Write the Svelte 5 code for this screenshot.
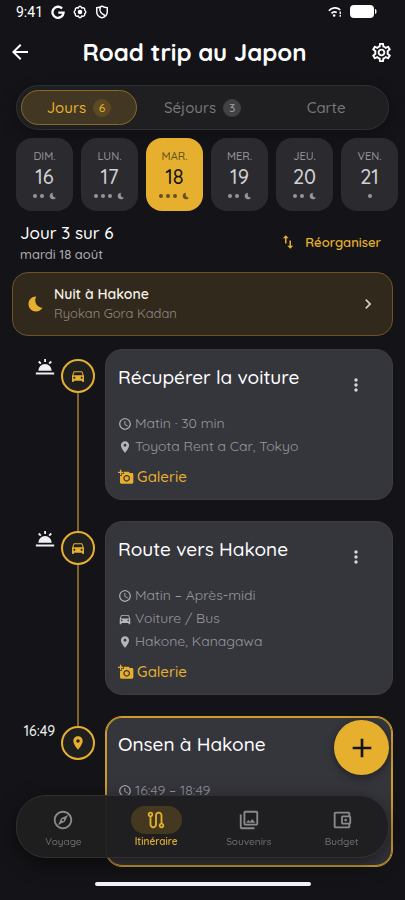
<script lang="ts">
  type IconName = keyof typeof icons;

  interface Meta {
    icon: IconName;
    text: string;
  }

  interface Step {
    title: string;
    time?: string;
    icon: IconName;
    active?: boolean;
    meta: Meta[];
  }

  const icons = {
    back: 'M20 11H7.83l5.59-5.59L12 4l-8 8 8 8 1.41-1.41L7.83 13H20v-2z',
    settings:
      'M19.43 12.98c.04-.32.07-.64.07-.98 0-.34-.03-.66-.07-.98l2.11-1.65c.19-.15.24-.42.12-.64l-2-3.46c-.09-.16-.26-.25-.44-.25-.06 0-.12.01-.17.03l-2.49 1c-.52-.4-1.08-.73-1.69-.98l-.38-2.65C14.46 2.18 14.25 2 14 2h-4c-.25 0-.46.18-.49.42l-.38 2.65c-.61.25-1.17.59-1.69.98l-2.49-1c-.06-.02-.12-.03-.18-.03-.17 0-.34.09-.43.25l-2 3.46c-.13.22-.07.49.12.64l2.11 1.65c-.04.32-.07.65-.07.98 0 .33.03.66.07.98l-2.11 1.65c-.19.15-.24.42-.12.64l2 3.46c.09.16.26.25.44.25.06 0 .12-.01.17-.03l2.49-1c.52.4 1.08.73 1.69.98l.38 2.65c.03.24.24.42.49.42h4c.25 0 .46-.18.49-.42l.38-2.65c.61-.25 1.17-.59 1.69-.98l2.49 1c.06.02.12.03.18.03.17 0 .34-.09.43-.25l2-3.46c.12-.22.07-.49-.12-.64l-2.11-1.65zm-1.98-1.71c.04.31.05.52.05.73 0 .21-.02.43-.05.73l-.14 1.13.89.7 1.08.84-.7 1.21-1.27-.51-1.04-.42-.9.68c-.43.32-.84.56-1.25.73l-1.06.43-.16 1.13-.2 1.35h-1.4l-.19-1.35-.16-1.13-1.06-.43c-.43-.18-.83-.41-1.23-.71l-.91-.7-1.06.43-1.27.51-.7-1.21 1.08-.84.89-.7-.14-1.13c-.03-.31-.05-.54-.05-.74s.02-.43.05-.73l.14-1.13-.89-.7-1.08-.84.7-1.21 1.27.51 1.04.42.9-.68c.43-.32.84-.56 1.25-.73l1.06-.43.16-1.13.2-1.35h1.39l.19 1.35.16 1.13 1.06.43c.43.18.83.41 1.23.71l.91.7 1.06-.43 1.27-.51.7 1.21-1.07.85-.89.7.14 1.13zM12 8c-2.21 0-4 1.79-4 4s1.79 4 4 4 4-1.79 4-4-1.79-4-4-4zm0 6c-1.1 0-2-.9-2-2s.9-2 2-2 2 .9 2 2-.9 2-2 2z',
    moon: 'M12.34 2.02C6.59 1.82 2 6.42 2 12c0 5.52 4.48 10 10 10 3.71 0 6.93-2.02 8.66-5.02-7.51-.25-12.09-8.43-8.32-14.96z',
    swap: 'M16 17.01V10h-2v7.01h-3L15 21l4-3.99h-3zM9 3 5 6.99h3V14h2V6.99h3L9 3z',
    chevron: 'M10 6 8.59 7.41 13.17 12l-4.58 4.59L10 18l6-6z',
    car: 'M18.92 6.01C18.72 5.42 18.16 5 17.5 5h-11c-.66 0-1.21.42-1.42 1.01L3 12v8c0 .55.45 1 1 1h1c.55 0 1-.45 1-1v-1h12v1c0 .55.45 1 1 1h1c.55 0 1-.45 1-1v-8l-2.08-5.99zM6.5 16c-.83 0-1.5-.67-1.5-1.5S5.67 13 6.5 13s1.5.67 1.5 1.5S7.33 16 6.5 16zm11 0c-.83 0-1.5-.67-1.5-1.5s.67-1.5 1.5-1.5 1.5.67 1.5 1.5-.67 1.5-1.5 1.5zM5 11l1.5-4.5h11L19 11H5z',
    place:
      'M12 2C8.13 2 5 5.13 5 9c0 5.25 7 13 7 13s7-7.75 7-13c0-3.87-3.13-7-7-7zm0 9.5c-1.38 0-2.5-1.12-2.5-2.5s1.12-2.5 2.5-2.5 2.5 1.12 2.5 2.5-1.12 2.5-2.5 2.5z',
    clock:
      'M11.99 2C6.47 2 2 6.48 2 12s4.47 10 9.99 10C17.52 22 22 17.52 22 12S17.52 2 11.99 2zM12 20c-4.42 0-8-3.58-8-8s3.58-8 8-8 8 3.58 8 8-3.58 8-8 8zm.5-13H11v6l5.25 3.15.75-1.23-4.5-2.67z',
    camera:
      'M3 4V1h2v3h3v2H5v3H3V6H0V4h3zm3 6V7h3V4h7l1.83 2H21c1.1 0 2 .9 2 2v12c0 1.1-.9 2-2 2H5c-1.1 0-2-.9-2-2V10h3zm7 9c2.76 0 5-2.24 5-5s-2.24-5-5-5-5 2.24-5 5 2.24 5 5 5zm-3.2-5c0 1.77 1.43 3.2 3.2 3.2s3.2-1.43 3.2-3.2-1.43-3.2-3.2-3.2-3.2 1.43-3.2 3.2z',
    more: 'M12 8c1.1 0 2-.9 2-2s-.9-2-2-2-2 .9-2 2 .9 2 2 2zm0 2c-1.1 0-2 .9-2 2s.9 2 2 2 2-.9 2-2-.9-2-2-2zm0 6c-1.1 0-2 .9-2 2s.9 2 2 2 2-.9 2-2-.9-2-2-2z',
    plus: 'M19 13h-6v6h-2v-6H5v-2h6V5h2v6h6v2z',
    sunrise:
      'M1 18.5h22v2.5H1zM4 16.5a8 8 0 0 1 16 0zM11 2.500h2.200v3.500h-2.200zM3.700 6.200l1.600-1.600 2.500 2.500-1.600 1.600zM20.300 6.200l-1.600-1.600-2.500 2.500 1.600 1.600z',
    compass:
      'M12 2C6.48 2 2 6.48 2 12s4.48 10 10 10 10-4.48 10-10S17.52 2 12 2zm0 18c-4.41 0-8-3.59-8-8s3.59-8 8-8 8 3.59 8 8-3.59 8-8 8zm-5.5-2.5l7.51-3.49L17.5 6.5 9.99 9.99 6.5 17.5zm5.5-6.6c.61 0 1.1.49 1.1 1.1s-.49 1.1-1.1 1.1-1.1-.49-1.1-1.1.49-1.1 1.1-1.1z',
    route:
      'M19 15.18V7c0-2.21-1.79-4-4-4s-4 1.79-4 4v10c0 1.1-.9 2-2 2s-2-.9-2-2V8.82C8.16 8.4 9 7.3 9 6c0-1.66-1.34-3-3-3S3 4.34 3 6c0 1.3.84 2.4 2 2.82V17c0 2.21 1.79 4 4 4s4-1.79 4-4V7c0-1.1.9-2 2-2s2 .9 2 2v8.18c-1.16.41-2 1.51-2 2.82 0 1.66 1.34 3 3 3s3-1.34 3-3c0-1.3-.84-2.4-2-2.82zM6 7c-.55 0-1-.45-1-1s.45-1 1-1 1 .45 1 1-.45 1-1 1zm12 12c-.55 0-1-.45-1-1s.45-1 1-1 1 .45 1 1-.45 1-1 1z',
    photos:
      'M20 4v12H8V4h12m0-2H8c-1.1 0-2 .9-2 2v12c0 1.1.9 2 2 2h12c1.1 0 2-.9 2-2V4c0-1.1-.9-2-2-2zM9 15l2.2-3.3 1.8 2.3 2.5-3.2L19 15zM2 6v14c0 1.1.9 2 2 2h14v-2H4V6H2z',
    wallet:
      'M21 7.28V5c0-1.1-.9-2-2-2H5c-1.11 0-2 .9-2 2v14c0 1.1.89 2 2 2h14c1.1 0 2-.9 2-2v-2.28c.59-.35 1-.98 1-1.72V9c0-.74-.41-1.37-1-1.72zM20 9v6h-7V9h7zM5 19V5h14v2h-6c-1.1 0-2 .9-2 2v6c0 1.1.9 2 2 2h6v2H5zM16 10.5a1.5 1.5 0 1 0 0 3 1.5 1.5 0 0 0 0-3z'
  };

  const tabs = [
    { label: 'Jours', count: 6 },
    { label: 'Séjours', count: 3 },
    { label: 'Carte', count: null }
  ];

  const days = [
    { name: 'DIM.', num: 16, dots: 2, night: true },
    { name: 'LUN.', num: 17, dots: 3, night: true },
    { name: 'MAR.', num: 18, dots: 3, night: true },
    { name: 'MER.', num: 19, dots: 2, night: true },
    { name: 'JEU.', num: 20, dots: 2, night: true },
    { name: 'VEN.', num: 21, dots: 1, night: false }
  ];

  const steps: Step[] = [
    {
      title: 'Récupérer la voiture',
      icon: 'car',
      meta: [
        { icon: 'clock', text: 'Matin · 30 min' },
        { icon: 'place', text: 'Toyota Rent a Car, Tokyo' }
      ]
    },
    {
      title: 'Route vers Hakone',
      icon: 'car',
      meta: [
        { icon: 'clock', text: 'Matin – Après-midi' },
        { icon: 'car', text: 'Voiture / Bus' },
        { icon: 'place', text: 'Hakone, Kanagawa' }
      ]
    },
    {
      title: 'Onsen à Hakone',
      time: '16:49',
      icon: 'place',
      active: true,
      meta: [{ icon: 'clock', text: '16:49 – 18:49' }]
    }
  ];

  const nav: { label: string; icon: IconName }[] = [
    { label: 'Voyage', icon: 'compass' },
    { label: 'Itinéraire', icon: 'route' },
    { label: 'Souvenirs', icon: 'photos' },
    { label: 'Budget', icon: 'wallet' }
  ];

  let activeTab = $state('Jours');
  let activeDay = $state(18);
  let activeNav = $state('Itinéraire');
</script>

{#snippet icon(name: IconName, size: number)}
  <svg class="icon" width={size} height={size} viewBox="0 0 24 24" aria-hidden="true">
    <path d={icons[name]} />
  </svg>
{/snippet}

<div class="screen">
  <div class="status-bar">
    <span class="clock">9:41</span>
    <svg width="14" height="14" viewBox="0 0 24 24" fill="none" stroke="currentColor" stroke-width="4">
      <path d="M19 6a9.5 9.5 0 1 0 2.5 7H12.5" />
    </svg>
    <svg width="14" height="14" viewBox="0 0 24 24" fill="none" stroke="currentColor" stroke-width="2.5">
      <path d="M9 5q3-6 6 0 6-1 5 4 4 3 0 6 1 5-5 4-3 6-6 0-6 1-5-4-4-3 0-6-1-5 5-4z" />
      <circle cx="12" cy="12" r="4" fill="currentColor" stroke="none" />
    </svg>
    <svg width="14" height="14" viewBox="0 0 24 24" fill="none" stroke="currentColor" stroke-width="2.5">
      <path d="M12 2c3 2 5.5 2.5 9 2.5V12c0 5-4 8.500-9 10-5-1.500-9-5-9-10V4.500C6.500 4.500 9 4 12 2zM9 4c-2 7 1 10 8 14" />
    </svg>
    <svg class="wifi" width="14" height="12" viewBox="0 0 16 13" fill="none" stroke="currentColor" stroke-width="2">
      <path d="M1 5a9 9 0 0 1 13-1M4 8a5 5 0 0 1 6-1" />
      <circle cx="7" cy="10.5" r="1.5" fill="currentColor" stroke="none" />
      <path d="M14 6v3M14 10v2" stroke-width="1.5" />
    </svg>
    <svg width="27" height="14" viewBox="0 0 27 14" fill="currentColor">
      <rect width="24" height="13" rx="4" />
      <path d="M25 4c2 0 2 5 0 5z" />
    </svg>
  </div>

  <header class="top">
    <button type="button" class="icon-button" aria-label="Retour">{@render icon('back', 24)}</button>
    <h1>Road trip au Japon</h1>
    <button type="button" class="icon-button" aria-label="Réglages">{@render icon('settings', 23)}</button>
  </header>

  <div class="tabs">
    {#each tabs as tab}
      <button type="button" class="tab" class:active={activeTab === tab.label} onclick={() => (activeTab = tab.label)}>
        {tab.label}
        {#if tab.count !== null}
          <span class="count">{tab.count}</span>
        {/if}
      </button>
    {/each}
  </div>

  <div class="days">
    {#each days as day}
      <button type="button" class="day" class:active={activeDay === day.num} onclick={() => (activeDay = day.num)}>
        <span class="day-name">{day.name}</span>
        <span class="day-num">{day.num}</span>
        <span class="marks">
          {#each { length: day.dots } as _}
            <i></i>
          {/each}
          {#if day.night}
            {@render icon('moon', 8)}
          {/if}
        </span>
      </button>
    {/each}
  </div>

  <section class="day-head">
    <div>
      <h2>Jour 3 sur 6</h2>
      <p>mardi 18 août</p>
    </div>
    <button type="button" class="reorder">{@render icon('swap', 18)} Réorganiser</button>
  </section>

  <a class="night" href="#nuit">
    <span class="night-moon">{@render icon('moon', 18)}</span>
    <span class="night-text">
      <strong>Nuit à Hakone</strong>
      <span>Ryokan Gora Kadan</span>
    </span>
    {@render icon('chevron', 20)}
  </a>

  <ol class="timeline">
    {#each steps as step}
      <li class="step">
        <div class="when">
          {#if step.time}
            {step.time}
          {:else}
            {@render icon('sunrise', 20)}
          {/if}
        </div>
        <div class="rail">
          <span class="node">{@render icon(step.icon, 16)}</span>
        </div>
        <article class="card" class:active={step.active}>
          <div class="card-head">
            <h3>{step.title}</h3>
            {#if !step.active}
              <button type="button" class="menu" aria-label="Options">{@render icon('more', 20)}</button>
            {/if}
          </div>
          <ul class="meta">
            {#each step.meta as item}
              <li>{@render icon(item.icon, 14)} {item.text}</li>
            {/each}
          </ul>
          {#if !step.active}
            <button type="button" class="gallery">{@render icon('camera', 16)} Galerie</button>
          {/if}
        </article>
      </li>
    {/each}
  </ol>

  <button type="button" class="fab" aria-label="Ajouter">{@render icon('plus', 32)}</button>

  <nav class="bottom-nav">
    {#each nav as item}
      <button type="button" class="nav-item" class:active={activeNav === item.label} onclick={() => (activeNav = item.label)}>
        <span class="nav-icon">{@render icon(item.icon, 22)}</span>
        {item.label}
      </button>
    {/each}
  </nav>
  <div class="home-bar"></div>
</div>

<style>
  :global(body) {
    background: #141418;
  }

  .screen {
    --amber: #e6b02e;
    --muted: #98989e;
    min-height: 100vh;
    box-sizing: border-box;
    padding-bottom: 32px;
    background: #141418;
    color: #fff;
    font-family: Quicksand, Lato, sans-serif;
    font-weight: 500;
    overflow-x: hidden;
  }

  .screen * {
    box-sizing: border-box;
  }

  button {
    padding: 0;
    border: none;
    background: none;
    color: inherit;
    font: inherit;
    cursor: pointer;
  }

  h1,
  h2,
  h3,
  p,
  ol,
  ul {
    margin: 0;
    padding: 0;
    list-style: none;
    font-weight: 500;
  }

  svg {
    display: block;
    flex-shrink: 0;
  }

  .icon {
    fill: currentColor;
  }

  .status-bar {
    display: flex;
    align-items: center;
    gap: 8px;
    height: 24px;
    padding: 0 28px 0 16px;
  }

  .clock {
    font: 14px/24px Roboto, sans-serif;
  }

  .wifi {
    margin-left: auto;
  }

  .top {
    display: flex;
    align-items: center;
    height: 56px;
  }

  .top h1 {
    flex: 1;
    padding-right: 8px;
    font-size: 24px;
    font-weight: 700;
    line-height: 32px;
    text-align: center;
  }

  .icon-button {
    display: grid;
    place-items: center;
    width: 40px;
    height: 48px;
  }

  .icon-button:last-child {
    width: 48px;
  }

  .tabs {
    display: grid;
    grid-template-columns: repeat(3, 1fr);
    gap: 8px;
    height: 45px;
    margin: 5px 16px 8px;
    padding: 4px;
    border: 1px solid #303034;
    border-radius: 23px;
    background: #1f1f21;
    box-shadow: 0 4px 16px rgba(0, 0, 0, 0.3);
  }

  .tab {
    display: flex;
    align-items: center;
    justify-content: center;
    gap: 7px;
    border: 1px solid transparent;
    border-radius: 18px;
    color: #77777a;
    font-size: 15px;
  }

  .tab.active {
    border-color: #87692a;
    background: #423722;
    color: var(--amber);
  }

  .count {
    width: 18px;
    height: 18px;
    border-radius: 9px;
    background: #424245;
    color: #a0a0a3;
    font-size: 12px;
    line-height: 18px;
  }

  .tab.active .count {
    background: #5c4923;
    color: var(--amber);
  }

  .days {
    display: flex;
    gap: 8px;
    padding-left: 16px;
    overflow: hidden;
  }

  .day {
    display: flex;
    flex-direction: column;
    align-items: center;
    flex: 0 0 57px;
    height: 73px;
    padding-top: 10px;
    border-radius: 16px;
    background: #2b2b2f;
    color: #96969a;
  }

  .day-name {
    font-size: 11px;
    line-height: 16px;
  }

  .day-num {
    color: #d0d0d4;
    font-size: 20px;
    line-height: 26px;
  }

  .marks {
    display: flex;
    align-items: center;
    gap: 3px;
    height: 12px;
  }

  .marks i {
    width: 4px;
    height: 4px;
    border-radius: 50%;
    background: currentColor;
  }

  .marks .icon {
    margin-left: 2px;
  }

  .day.active {
    background: var(--amber);
    color: #62501e;
  }

  .day.active .day-num {
    color: #141418;
  }

  .day-head {
    display: flex;
    align-items: center;
    justify-content: space-between;
    height: 61px;
    padding: 0 24px 0 20px;
  }

  .day-head h2 {
    font-size: 17px;
    line-height: 24px;
  }

  .day-head p {
    color: #b0b0b5;
    font-size: 13px;
    line-height: 18px;
  }

  .reorder {
    display: flex;
    align-items: center;
    gap: 8px;
    color: var(--amber);
    font-size: 13px;
    font-weight: 600;
  }

  .night {
    display: flex;
    align-items: center;
    height: 64px;
    margin: 0 12px 13px;
    padding: 0 14px;
    border: 1px solid #6c5225;
    border-radius: 16px;
    background: #32291d;
    color: #dccdb4;
    text-decoration: none;
  }

  .night-moon {
    color: var(--amber);
  }

  .night-text {
    display: flex;
    flex: 1;
    flex-direction: column;
    margin-left: 9px;
    color: #918a80;
    font-size: 13px;
    line-height: 19px;
  }

  .night-text span {
    font-weight: 400;
  }

  .night-text strong {
    color: #f7f2e8;
    font-size: 14px;
    font-weight: 600;
  }

  .timeline {
    padding: 0 12px;
  }

  .step {
    display: grid;
    grid-template-columns: 43px 34px 1fr;
    column-gap: 6px;
  }

  .when {
    display: flex;
    justify-content: flex-end;
    padding-top: 5px;
    color: #f0f0f2;
    font-size: 14px;
    line-height: 20px;
  }

  .when .icon {
    margin-top: 3px;
  }

  .rail {
    display: flex;
    flex-direction: column;
    align-items: center;
  }

  .rail::before,
  .rail::after {
    content: '';
    width: 2px;
    background: #80632a;
  }

  .rail::before {
    height: 10px;
  }

  .rail::after {
    flex: 1;
  }

  .step:first-child .rail::before,
  .step:last-child .rail::after {
    background: none;
  }

  .node {
    display: grid;
    place-items: center;
    width: 34px;
    height: 34px;
    border: 2px solid var(--amber);
    border-radius: 50%;
    background: #1f1f20;
    color: var(--amber);
  }

  .card {
    min-height: 151px;
    margin: 0 0 21px 4px;
    padding: 11px 12px 10px;
    border: 1px solid #3c3c42;
    border-radius: 17px;
    background: #35353c;
  }

  .step:last-child .card {
    margin-bottom: 0;
  }

  .card.active {
    border-color: #cd9c2c;
    box-shadow: inset 0 0 0 1px #cd9c2c;
  }

  .card-head {
    display: flex;
    justify-content: space-between;
    height: 48px;
    margin-bottom: 3px;
  }

  .card-head h3 {
    font-size: 19px;
    line-height: 32px;
  }

  .menu {
    display: grid;
    place-items: center;
    width: 48px;
    height: 48px;
    color: #d6d6da;
  }

  .meta li {
    display: flex;
    align-items: center;
    gap: 3px;
    color: var(--muted);
    font-size: 14px;
    font-weight: 400;
    line-height: 23px;
  }

  .meta .icon {
    color: #b6b6ba;
  }

  .gallery {
    display: flex;
    align-items: center;
    gap: 3px;
    margin-top: 7px;
    color: var(--amber);
    font-size: 15px;
    line-height: 24px;
  }

  .fab {
    position: fixed;
    right: 16px;
    bottom: 125px;
    display: grid;
    place-items: center;
    width: 55px;
    height: 55px;
    border-radius: 50%;
    background: var(--amber);
    color: #141418;
    box-shadow: 0 3px 8px rgba(0, 0, 0, 0.4);
  }

  .bottom-nav {
    position: fixed;
    right: 16px;
    bottom: 42px;
    left: 16px;
    display: grid;
    grid-template-columns: repeat(4, 1fr);
    height: 63px;
    border: 1px solid #303032;
    border-radius: 30px;
    background: rgba(31, 31, 32, 0.97);
    box-shadow: 0 6px 20px rgba(0, 0, 0, 0.5);
  }

  .nav-item {
    display: flex;
    flex-direction: column;
    align-items: center;
    padding-top: 10px;
    color: #6f6f72;
    font-size: 10px;
    line-height: 16px;
  }

  .nav-icon {
    display: grid;
    place-items: center;
    width: 51px;
    height: 28px;
    border-radius: 14px;
    color: #8a8a8d;
  }

  .nav-item.active,
  .nav-item.active .nav-icon {
    color: var(--amber);
  }

  .nav-item.active {
    font-weight: 600;
  }

  .nav-item.active .nav-icon {
    background: #443920;
  }

  .home-bar {
    position: fixed;
    bottom: 14px;
    left: 50%;
    width: 216px;
    height: 4px;
    border-radius: 2px;
    background: #f2f2f4;
    transform: translateX(-50%);
  }
</style>
